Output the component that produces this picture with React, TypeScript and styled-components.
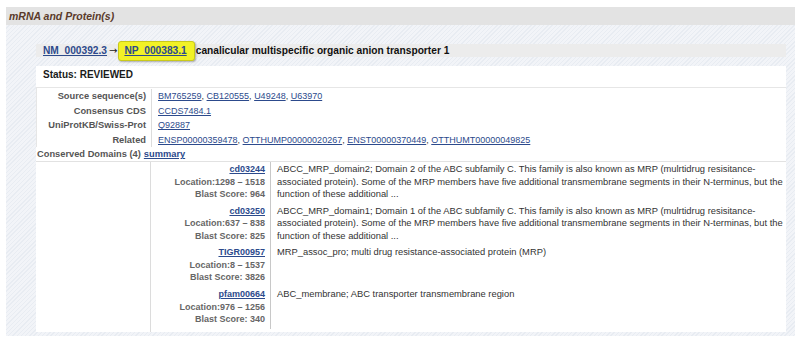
import React from "react";
import styled, { createGlobalStyle } from "styled-components";

const GlobalStyle = createGlobalStyle`
  body {
    margin: 0;
    background: #ffffff;
    font-family: "Liberation Sans", Arial, sans-serif;
  }
`;

const Section = styled.section`
  margin: 7px 5px 0 6px;
`;

const Header = styled.div`
  height: 18px;
  display: flex;
  align-items: center;
  padding-left: 3px;
  background: #e3e3e3;
  color: #5a3a2a;
  font-size: 10.5px;
  font-weight: bold;
  font-style: italic;
`;

const Body = styled.div`
  padding: 19px 9px 4px 30px;
  background: repeating-linear-gradient(
    135deg,
    #f2f4f8 0px,
    #f2f4f8 2px,
    #e8ecf2 2px,
    #e8ecf2 3px
  );
`;

const TitleBar = styled.div`
  height: 13px;
  display: flex;
  align-items: center;
  padding-left: 7px;
  background: #ececec;
  font-size: 10.2px;
  font-weight: bold;
  color: #111;
  white-space: nowrap;
`;

const Link = styled.a<{ $bold?: boolean }>`
  color: #2c4a8c;
  text-decoration: underline;
  font-weight: ${(p) => (p.$bold ? "bold" : "normal")};
  cursor: pointer;
`;

const Arrow = styled.span`
  margin: 0 1px 0 2px;
  color: #222;
  font-family: "DejaVu Sans", sans-serif;
  font-size: 10px;
  font-weight: normal;
`;

const Highlight = styled.span`
  display: inline-flex;
  align-items: center;
  height: 18px;
  padding: 0 7px 0 5px;
  margin-right: 1px;
  background: #f2f226;
  border: 1px solid #c9c91a;
  border-radius: 3px;
  box-shadow: 1px 1px 2px rgba(0, 0, 0, 0.3);
`;

const Panel = styled.div`
  margin-top: 9px;
  background: #ffffff;
`;

const Status = styled.div`
  height: 16px;
  display: flex;
  align-items: center;
  padding-left: 7px;
  font-size: 10px;
  font-weight: bold;
  color: #1a1a1a;
`;

const InfoTable = styled.div`
  margin-top: 5px;
  padding-top: 1px;
  display: grid;
  grid-template-columns: 115px 1fr;
  border-top: 1px solid #e6e6e6;
  border-left: 1px solid #e6e6e6;
`;

const Label = styled.div`
  height: 14.5px;
  display: flex;
  align-items: center;
  justify-content: flex-end;
  padding-right: 5px;
  border-right: 1px solid #dcdcdc;
  font-size: 9.3px;
  font-weight: bold;
  color: #555;
  white-space: nowrap;
`;

const Value = styled.div`
  height: 14.5px;
  display: flex;
  align-items: center;
  padding-left: 6px;
  font-size: 9px;
  color: #333;
  white-space: nowrap;
`;

const Conserved = styled.div`
  height: 14px;
  display: flex;
  align-items: center;
  gap: 3px;
  padding-left: 1px;
  font-size: 9.3px;
  font-weight: bold;
  color: #555;
  border-bottom: 1px solid #e2e2e2;
`;

const DomainTable = styled.div`
  display: grid;
  grid-template-columns: 115px 120px 1fr;
`;

const Blank = styled.div`
  border-right: 1px solid #dcdcdc;
`;

const DomainList = styled.div`
  grid-column: 2 / 4;
  display: flex;
  flex-direction: column;
  padding-bottom: 3px;
`;

const DomainRow = styled.div`
  display: grid;
  grid-template-columns: 120px 1fr;
  height: 41.7px;
`;

const DomainMeta = styled.div`
  display: flex;
  flex-direction: column;
  align-items: flex-end;
  padding: 1px 5px 0 0;
  border-right: 1px solid #c8c8c8;
  font-size: 9px;
  line-height: 12.5px;
  font-weight: bold;
  color: #666;
  white-space: nowrap;
`;

const DomainDesc = styled.div`
  padding: 1px 2px 0 6px;
  font-size: 9.35px;
  line-height: 12.5px;
  color: #333;
`;

const sources = ["BM765259", "CB120555", "U49248", "U63970"];
const related = ["ENSP00000359478", "OTTHUMP00000020267", "ENST00000370449", "OTTHUMT00000049825"];

const domains = [
  {
    id: "cd03244",
    loc: "1298 \u2013 1518",
    score: "964",
    desc:
      "ABCC_MRP_domain2; Domain 2 of the ABC subfamily C. This family is also known as MRP (mulrtidrug resisitance-associated protein). Some of the MRP members have five additional transmembrane segments in their N-terminus, but the function of these additional ...",
  },
  {
    id: "cd03250",
    loc: "637 \u2013 838",
    score: "825",
    desc:
      "ABCC_MRP_domain1; Domain 1 of the ABC subfamily C. This family is also known as MRP (mulrtidrug resisitance-associated protein). Some of the MRP members have five additional transmembrane segments in their N-terminas, but the function of these additional ...",
  },
  {
    id: "TIGR00957",
    loc: "8 \u2013 1537",
    score: "3826",
    desc: "MRP_assoc_pro; multi drug resistance-associated protein (MRP)",
  },
  {
    id: "pfam00664",
    loc: "976 \u2013 1256",
    score: "340",
    desc: "ABC_membrane; ABC transporter transmembrane region",
  },
];

const LinkList: React.FC<{ items: string[] }> = ({ items }) => (
  <>
    {items.map((s, i) => (
      <React.Fragment key={s}>
        <Link>{s}</Link>
        {i < items.length - 1 && ",\u00a0"}
      </React.Fragment>
    ))}
  </>
);

const App: React.FC = () => {
  return (
    <>
      <GlobalStyle />
      <Section>
        <Header>mRNA and Protein(s)</Header>
        <Body>
          <TitleBar>
            <Link $bold>NM_000392.3</Link>
            <Arrow>→</Arrow>
            <Highlight>
              <Link $bold>NP_000383.1</Link>
            </Highlight>
            canalicular multispecific organic anion transporter 1
          </TitleBar>
          <Panel>
            <Status>Status: REVIEWED</Status>
            <InfoTable>
              <Label>Source sequence(s)</Label>
              <Value>
                <LinkList items={sources} />
              </Value>
              <Label>Consensus CDS</Label>
              <Value>
                <Link>CCDS7484.1</Link>
              </Value>
              <Label>UniProtKB/Swiss-Prot</Label>
              <Value>
                <Link>Q92887</Link>
              </Value>
              <Label>Related</Label>
              <Value>
                <LinkList items={related} />
              </Value>
            </InfoTable>
            <Conserved>
              Conserved Domains (4) <Link $bold>summary</Link>
            </Conserved>
            <DomainTable>
              <Blank />
              <DomainList>
                {domains.map((d) => (
                  <DomainRow key={d.id}>
                    <DomainMeta>
                      <Link $bold>{d.id}</Link>
                      <span>Location:{d.loc}</span>
                      <span>Blast Score: {d.score}</span>
                    </DomainMeta>
                    <DomainDesc>{d.desc}</DomainDesc>
                  </DomainRow>
                ))}
              </DomainList>
            </DomainTable>
          </Panel>
        </Body>
      </Section>
    </>
  );
};

export default App;
